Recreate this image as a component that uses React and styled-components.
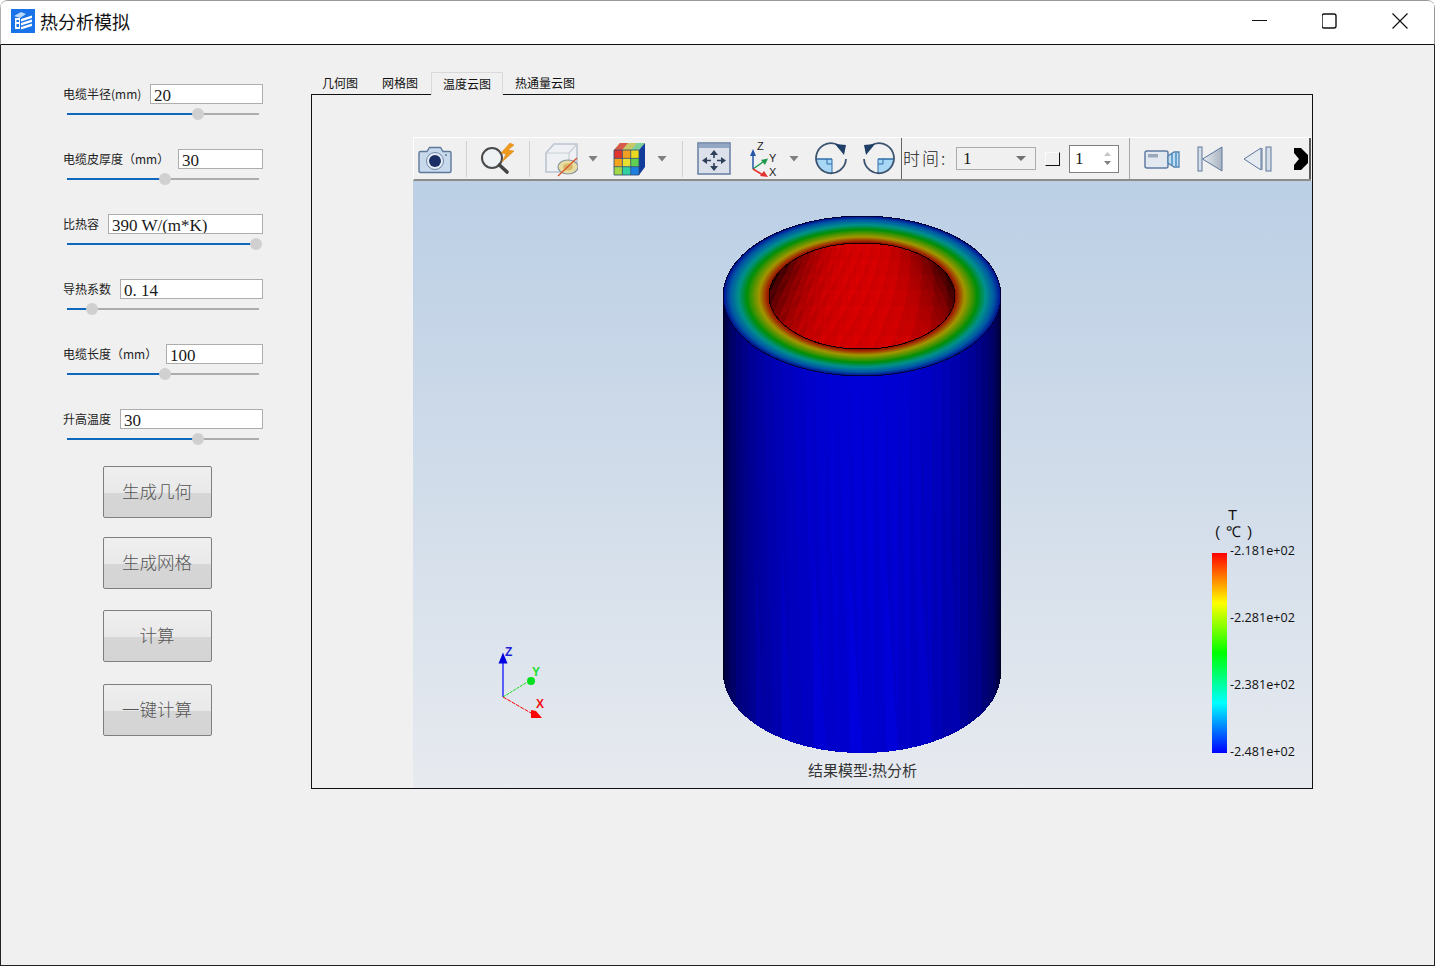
import styled, { createGlobalStyle } from "styled-components";

const GlobalStyle = createGlobalStyle`
  html, body {
    margin: 0;
    padding: 0;
    background: #fff;
  }
  * {
    box-sizing: border-box;
  }
`;

const UI_FONT = `"Noto Sans CJK SC", "Liberation Sans", sans-serif`;
const SERIF_FONT = `"Liberation Serif", "Noto Sans CJK SC", serif`;

const params = [
  { label: "电缆半径(mm)", value: "20", inputWidth: 113, pct: 68 },
  { label: "电缆皮厚度（mm）", value: "30", inputWidth: 85, pct: 51 },
  { label: "比热容", value: "390 W/(m*K)", inputWidth: 155, pct: 98.5 },
  { label: "导热系数", value: "0. 14", inputWidth: 143, pct: 13 },
  { label: "电缆长度（mm）", value: "100", inputWidth: 97, pct: 51 },
  { label: "升高温度", value: "30", inputWidth: 143, pct: 68 },
];

const actions = [
  { text: "生成几何", top: 26 },
  { text: "生成网格", top: 19 },
  { text: "计算", top: 21 },
  { text: "一键计算", top: 22 },
];

const tabs = ["几何图", "网格图", "温度云图", "热通量云图"];
const ticks = ["-2.181e+02", "-2.281e+02", "-2.381e+02", "-2.481e+02"];

// cylinder geometry, in canvas coordinates
const CX = 449;
const TOP_Y = 115;
const BOTTOM_Y = 492;
const RX = 139;
const RY = 80;
const HOLE_RX = 93;
const HOLE_RY = 53;

function sideFacets() {
  const out = [];
  const n = 36;
  const px = (t) => CX + RX * Math.cos(t);
  const py = (t, base) => base + RY * Math.sin(t);
  for (let i = 0; i < n; i++) {
    const a = (Math.PI * i) / n;
    const b = (Math.PI * (i + 1)) / n;
    const c = (Math.PI * Math.min(i + 3, n)) / n;
    const shade = Math.sin((a + b) / 2) ** 0.8;
    const blue = Math.round(18 + 196 * shade);
    const blue2 = Math.round(18 + 188 * shade);
    out.push(
      <polygon
        key={`a${i}`}
        fill={`rgb(0,0,${blue})`}
        points={`${px(a)},${py(a, TOP_Y)} ${px(b)},${py(b, TOP_Y)} ${px(a)},${py(a, BOTTOM_Y)}`}
      />,
      <polygon
        key={`b${i}`}
        fill={`rgb(0,0,${blue2})`}
        points={`${px(b)},${py(b, TOP_Y)} ${px(a)},${py(a, BOTTOM_Y)} ${px(b)},${py(b, BOTTOM_Y)}`}
      />,
    );
    if (i % 3 === 0 && c > b) {
      out.push(
        <polygon
          key={`c${i}`}
          fill={`rgb(0,0,${Math.round(18 + 202 * shade)})`}
          points={`${px(b)},${py(b, TOP_Y + 190)} ${px(c)},${py(c, BOTTOM_Y)} ${px(a)},${py(a, BOTTOM_Y)}`}
        />,
      );
    }
  }
  return out;
}

function holeFacets() {
  const out = [];
  const apex = { x: CX, y: TOP_Y - 180 };
  const n = 30;
  const rows = 9;
  const startT = 0.42;
  const edge = (i) => ({
    x: CX + HOLE_RX * 1.42 * (2 * i / n - 1),
    y: TOP_Y + 55,
  });
  const pt = (i, j) => {
    const e = edge(i);
    const t = startT + ((1 - startT) * j) / rows;
    return { x: apex.x + (e.x - apex.x) * t, y: apex.y + (e.y - apex.y) * t };
  };
  const str = (p) => `${p.x},${p.y}`;
  for (let i = 0; i < n; i++) {
    for (let j = 0; j < rows; j++) {
      const a = pt(i, j);
      const b = pt(i + 1, j);
      const c = pt(i, j + 1);
      const d = pt(i + 1, j + 1);
      const u = Math.abs(i + 0.5 - n / 2) / (n / 2);
      const base = 28 + 182 * (1 - u ** 2.8);
      const odd = (i + j) % 2 === 0 ? 1 : 0;
      out.push(
        <polygon
          key={`h${i}-${j}a`}
          fill={`rgb(${Math.round(base + 8 * odd)},0,0)`}
          points={`${str(a)} ${str(b)} ${str(c)}`}
        />,
        <polygon
          key={`h${i}-${j}b`}
          fill={`rgb(${Math.round(base - 6 + 8 * (1 - odd))},0,0)`}
          points={`${str(b)} ${str(c)} ${str(d)}`}
        />,
      );
    }
  }
  return out;
}

function CableModel() {
  return (
    <ModelSvg width="899" height="607" viewBox="0 0 899 607" shapeRendering="crispEdges">
      <defs>
        <radialGradient id="ring">
          <stop offset="0.665" stopColor="#8c0a00" />
          <stop offset="0.69" stopColor="#a02c00" />
          <stop offset="0.74" stopColor="#a29600" />
          <stop offset="0.78" stopColor="#5c9400" />
          <stop offset="0.83" stopColor="#008e08" />
          <stop offset="0.89" stopColor="#00908c" />
          <stop offset="0.95" stopColor="#0058a4" />
          <stop offset="1" stopColor="#000c90" />
        </radialGradient>
        <clipPath id="hole">
          <ellipse cx={CX} cy={TOP_Y} rx={HOLE_RX} ry={HOLE_RY} />
        </clipPath>
      </defs>
      <path
        d={`M${CX - RX} ${TOP_Y} V${BOTTOM_Y} A${RX} ${RY} 0 0 0 ${CX + RX} ${BOTTOM_Y} V${TOP_Y} Z`}
        fill="#000080"
      />
      {sideFacets()}
      <ellipse cx={CX} cy={TOP_Y} rx={RX} ry={RY} fill="url(#ring)" stroke="#00003a" strokeWidth="1" />
      <g clipPath="url(#hole)">
        <rect x={CX - HOLE_RX} y={TOP_Y - HOLE_RY} width={HOLE_RX * 2} height={HOLE_RY * 2} fill="#c80000" />
        {holeFacets()}
      </g>
      <ellipse cx={CX} cy={TOP_Y} rx={HOLE_RX} ry={HOLE_RY} fill="none" stroke="#120000" strokeWidth="1" />
    </ModelSvg>
  );
}

function AxisTriad() {
  return (
    <TriadSvg width="60" height="80" viewBox="0 0 60 80">
      <line x1="10" y1="57" x2="10" y2="22" stroke="#0000ff" strokeWidth="1.2" />
      <path d="M10 12.5 L14.5 23.5 H5.5 Z" fill="#0000e0" />
      <text x="12" y="16" fontFamily="Liberation Sans" fontWeight="700" fontSize="12" fill="#2020d8">Z</text>
      <line x1="10" y1="57" x2="36" y2="41" stroke="#10e010" strokeWidth="1" strokeDasharray="3 1" />
      <circle cx="38" cy="41" r="4" fill="#00e020" />
      <text x="39" y="36" fontFamily="Liberation Sans" fontWeight="700" fontSize="12" fill="#20e030">Y</text>
      <line x1="10" y1="57" x2="38" y2="73" stroke="#ff0000" strokeWidth="1" strokeDasharray="4 1" />
      <path d="M38 70 L43 71 L49 78 H38 Z" fill="#ff0000" />
      <text x="43" y="68" fontFamily="Liberation Sans" fontWeight="700" fontSize="12" fill="#f01010">X</text>
    </TriadSvg>
  );
}

function AppIcon() {
  return (
    <svg width="24" height="24" viewBox="0 0 24 24">
      <rect width="24" height="24" fill="#1a73e8" />
      <path d="M3 7 L10 3 L15 5 L9 9 Z" fill="#bcd8fa" />
      <path d="M4 9 H9 V20 H4 Z M5.5 11 V13 H8 V11 Z M5.5 15 V18 H8 V15 Z" fill="#fff" fillRule="evenodd" />
      <path d="M10 10 L21 6.5 V9 L10 12.5 Z M10 14 L21 10.5 V13 L10 16.5 Z M10 18 L21 14.5 V17 L10 20.5 Z" fill="#fff" />
    </svg>
  );
}

function App() {
  return (
    <Window>
      <GlobalStyle />
      <TitleBar>
        <AppIcon />
        <TitleText>热分析模拟</TitleText>
        <WindowButtons>
          <WindowButton>
            <svg width="16" height="16" viewBox="0 0 16 16">
              <line x1="0" y1="7.5" x2="15" y2="7.5" stroke="#111" />
            </svg>
          </WindowButton>
          <WindowButton>
            <svg width="16" height="16" viewBox="0 0 16 16">
              <rect x="0" y="1" width="14" height="14" rx="2" fill="none" stroke="#111" strokeWidth="1.4" />
            </svg>
          </WindowButton>
          <WindowButton>
            <svg width="16" height="16" viewBox="0 0 16 16">
              <path d="M0.5 0.5 L15.5 15.5 M15.5 0.5 L0.5 15.5" stroke="#111" strokeWidth="1.2" />
            </svg>
          </WindowButton>
        </WindowButtons>
      </TitleBar>

      <Body>
        <Sidebar>
          <ParamList>
            {params.map((p) => (
              <Param key={p.label}>
                <ParamRow>
                  <ParamLabel>{p.label}</ParamLabel>
                  <ParamInput $w={p.inputWidth} defaultValue={p.value} />
                </ParamRow>
                <Slider>
                  <SliderFill $pct={p.pct} />
                  <SliderThumb $pct={p.pct} />
                </Slider>
              </Param>
            ))}
          </ParamList>
          {actions.map((a) => (
            <ActionButton key={a.text} $top={a.top}>
              {a.text}
            </ActionButton>
          ))}
        </Sidebar>

        <Main>
          <TabStrip>
            {tabs.map((t, i) => (
              <Tab key={t} $active={i === 2}>
                {t}
              </Tab>
            ))}
          </TabStrip>
          <TabPanel>
            <Viewer>
              <Toolbar>
                <Icon $ml={0} width="34" height="30" viewBox="0 0 34 30">
                  <path d="M2.5 7.5 H9 L11.5 3.5 H22.5 L25 7.5 H31.5 Q33 7.5 33 9 V27 Q33 28.5 31.5 28.5 H2.5 Q1 28.5 1 27 V9 Q1 7.5 2.5 7.5 Z" fill="#c9d9ec" stroke="#5d7899" strokeWidth="1.4" />
                  <circle cx="17" cy="17" r="8.5" fill="#e8eef6" stroke="#6c86a8" />
                  <circle cx="17" cy="17" r="6" fill="#1b2f66" />
                  <circle cx="28" cy="11" r="1" fill="#5d7899" />
                </Icon>
                <ToolSep $ml={14} />
                <Icon $ml={13} width="36" height="32" viewBox="0 0 36 32">
                  <circle cx="12" cy="15" r="10" fill="#eef1f4" stroke="#4a4a4a" strokeWidth="2" />
                  <path d="M19.5 22 L27 29" stroke="#444" strokeWidth="3.6" strokeLinecap="round" />
                  <path d="M30 0 L21 10 L26 11 L22 19 L34 8 L28 7 L34 2 Z" fill="#ef9a1a" stroke="#d67d10" strokeWidth="0.5" />
                </Icon>
                <ToolSep $ml={13} />
                <Icon $ml={14} width="34" height="36" viewBox="0 0 34 36">
                  <path d="M2 12 L10 3 H33 V22 L27 31 H2 Z" fill="#eef0f3" stroke="#bcc4cf" strokeWidth="1.6" />
                  <path d="M2 12 H25 V31 M25 12 L33 3" fill="none" stroke="#c8cfd8" strokeWidth="1.2" />
                  <ellipse cx="24" cy="26" rx="10" ry="7" fill="#e8dda0" stroke="#8893a3" strokeWidth="1.2" />
                  <ellipse cx="24" cy="26" rx="5" ry="3.5" fill="#d9b76a" />
                  <line x1="14" y1="35" x2="33" y2="17" stroke="#d9532c" strokeWidth="1.3" />
                </Icon>
                <Caret $ml={10} />
                <Icon $ml={15} width="33" height="34" viewBox="0 0 33 34">
                  <path d="M1 8 L7 1 H32 L26 8 Z" fill="#c8c868" />
                  <path d="M7 1 H15 L9 8 H1 Z" fill="#d85a4a" />
                  <path d="M24 1 H32 L26 8 H18 Z" fill="#7fcf9a" />
                  <path d="M26 8 L32 1 V25 L26 33 Z" fill="#123c9c" />
                  <rect x="1" y="8" width="8.4" height="8.4" fill="#e0342c" />
                  <rect x="9.4" y="8" width="8.3" height="8.4" fill="#f0a020" />
                  <rect x="17.7" y="8" width="8.3" height="8.4" fill="#e8d820" />
                  <rect x="1" y="16.4" width="8.4" height="8.3" fill="#f4a418" />
                  <rect x="9.4" y="16.4" width="8.3" height="8.3" fill="#e8e030" />
                  <rect x="17.7" y="16.4" width="8.3" height="8.3" fill="#60d050" />
                  <rect x="1" y="24.7" width="8.4" height="8.3" fill="#a0d848" />
                  <rect x="9.4" y="24.7" width="8.3" height="8.3" fill="#30d0a0" />
                  <rect x="17.7" y="24.7" width="8.3" height="8.3" fill="#2080e0" />
                  <path d="M1 8 H26 V33 H1 Z M9.4 8 V33 M17.7 8 V33 M1 16.4 H26 M1 24.7 H26" fill="none" stroke="#2c4a6e" strokeWidth="0.8" />
                </Icon>
                <Caret $ml={11} />
                <ToolSep $ml={15} />
                <Icon $ml={14} width="34" height="33" viewBox="0 0 34 33">
                  <rect x="1" y="1" width="32" height="31" fill="#dbe0ea" stroke="#6d84a6" strokeWidth="1.6" />
                  <rect x="2" y="2" width="30" height="4" fill="#93a6c4" />
                  <path d="M17 8 L21 13 H13 Z M17 29 L21 24 H13 Z M5 18.5 L10 15 V22 Z M29 18.5 L24 15 V22 Z" fill="#2d3f59" />
                  <path d="M17 13 V16 M17 21 V24 M10 18.5 H14 M20 18.5 H24" stroke="#2d3f59" strokeWidth="1.6" />
                </Icon>
                <Icon $ml={19} width="30" height="36" viewBox="0 0 30 36">
                  <line x1="3" y1="28" x2="3" y2="13" stroke="#2456a8" strokeWidth="1.5" />
                  <path d="M3 8 L6 15 H0 Z" fill="#2456a8" />
                  <text x="7" y="9" fontFamily="Liberation Sans" fontSize="11" fill="#222">Z</text>
                  <line x1="3" y1="28" x2="13" y2="21" stroke="#1e9a4c" strokeWidth="1.5" />
                  <path d="M18 17.5 L15 24 L11 19 Z" fill="#1e9a4c" />
                  <text x="19" y="21" fontFamily="Liberation Sans" fontSize="11" fill="#222">Y</text>
                  <line x1="3" y1="28" x2="13" y2="34" stroke="#e53030" strokeWidth="1.5" />
                  <path d="M18 36 L10 35 L14 30 Z" fill="#e53030" />
                  <text x="19" y="35" fontFamily="Liberation Sans" fontSize="11" fill="#222">X</text>
                </Icon>
                <Caret $ml={9} />
                <Icon $ml={16} width="32" height="33" viewBox="0 0 32 33">
                  <path d="M1.5 17 H17 V31.5 A15 15 0 0 1 1.5 17 Z" fill="#a8d6f5" />
                  <path d="M12 17 V22 H17" fill="none" stroke="#2f6ea8" />
                  <line x1="1" y1="17" x2="17" y2="17" stroke="#2f6ea8" strokeWidth="1.4" />
                  <path d="M17 17 V31" stroke="#2f6ea8" />
                  <path d="M24 3.5 A15 15 0 1 0 31 17" fill="none" stroke="#3d5470" strokeWidth="1.8" />
                  <path d="M20 2 L31 3 L29 13 Z" fill="#1f3f66" />
                </Icon>
                <Icon $ml={16} width="32" height="33" viewBox="0 0 32 33">
                  <path d="M30.5 17 H15 V31.5 A15 15 0 0 0 30.5 17 Z" fill="#a8d6f5" />
                  <path d="M20 17 V22 H15" fill="none" stroke="#2f6ea8" />
                  <line x1="15" y1="17" x2="31" y2="17" stroke="#2f6ea8" strokeWidth="1.4" />
                  <path d="M15 17 V31" stroke="#2f6ea8" />
                  <path d="M8 3.5 A15 15 0 1 1 1 17" fill="none" stroke="#3d5470" strokeWidth="1.8" />
                  <path d="M12 2 L1 3 L3 13 Z" fill="#1f3f66" />
                </Icon>
                <ToolDivider $ml={6} $dark />
                <TimeLabel>时间:</TimeLabel>
                <Combo>
                  1
                  <ComboCaret />
                </Combo>
                <CornerBox />
                <SpinBox>
                  1
                  <SpinArrows>
                    <SpinArrow />
                    <SpinArrow $down />
                  </SpinArrows>
                </SpinBox>
                <ToolDivider $ml={10} />
                <Icon $ml={14} width="36" height="20" viewBox="0 0 36 20">
                  <rect x="1" y="2" width="23" height="17" rx="2" fill="#e2e8f0" stroke="#5f7ba0" strokeWidth="1.5" />
                  <rect x="4" y="5" width="10" height="3.5" fill="#9aa8ba" />
                  <path d="M24 7 L30 3 H35 V18 H30 L24 14 Z" fill="#c4dcee" stroke="#4f82b0" strokeWidth="1.3" />
                  <path d="M28 5 V16 M32 4 V17" stroke="#2f86c0" strokeWidth="1.3" />
                </Icon>
                <Icon $ml={17} width="26" height="26" viewBox="0 0 26 26">
                  <defs>
                    <linearGradient id="firstFill" x1="0" x2="1">
                      <stop offset="0" stopColor="#e8ecf2" />
                      <stop offset="1" stopColor="#a8b2c0" />
                    </linearGradient>
                  </defs>
                  <rect x="1" y="1" width="4" height="24" fill="#d5dde8" stroke="#5c779c" />
                  <path d="M5.5 13 L25 1 V25 Z" fill="url(#firstFill)" stroke="#5c779c" />
                </Icon>
                <Icon $ml={20} width="30" height="26" viewBox="0 0 30 26">
                  <path d="M1 13 L18 2 V24 Z" fill="#e6ebf2" stroke="#5c779c" />
                  <rect x="23" y="1" width="5" height="24" fill="#d5dde8" stroke="#5c779c" />
                  <line x1="19" y1="2" x2="19" y2="24" stroke="#5c779c" />
                </Icon>
                <Icon $ml={21} width="14" height="22" viewBox="0 0 14 22">
                  <path d="M0 0 H7 L14 7 V15 L7 22 H0 V17 L5 11 L0 5 Z" fill="#000" />
                </Icon>
              </Toolbar>
              <Canvas>
                <CableModel />
                <AxisTriad />
                <Legend>
                  <LegendTitle>T</LegendTitle>
                  <LegendUnit>( ℃ )</LegendUnit>
                  <LegendScale>
                    <ColorBar />
                    <TickList>
                      {ticks.map((t) => (
                        <Tick key={t}>{t}</Tick>
                      ))}
                    </TickList>
                  </LegendScale>
                </Legend>
                <Caption>结果模型:热分析</Caption>
              </Canvas>
            </Viewer>
          </TabPanel>
        </Main>
      </Body>
    </Window>
  );
}

const Window = styled.div`
  width: 1435px;
  height: 966px;
  display: flex;
  flex-direction: column;
  overflow: hidden;
  border-top: 1px solid #989898;
  border-radius: 8px 8px 0 0;
  background: #f0f0f0;
  font-family: ${UI_FONT};
`;

const TitleBar = styled.header`
  flex: none;
  height: 44px;
  display: flex;
  align-items: center;
  padding: 0 0 3px 10px;
  background: #fff;
  border-bottom: 1px solid #111;
  border-left: 1px solid #b0b0b0;
  border-right: 1px solid #989898;
`;

const TitleText = styled.span`
  margin: -1px 0 0 5px;
  font-size: 18px;
  color: #111;
`;

const WindowButtons = styled.div`
  margin-left: auto;
  margin-right: 26px;
  display: flex;
  gap: 54px;
`;

const WindowButton = styled.div`
  width: 16px;
  height: 16px;
  display: flex;
`;

const Body = styled.div`
  flex: 1;
  display: flex;
  border: 1px solid #222;
  border-top: none;
`;

const Sidebar = styled.aside`
  flex: none;
  width: 310px;
  padding: 39px 0 0 62px;
  display: flex;
  flex-direction: column;
`;

const ParamList = styled.div`
  width: 200px;
  display: flex;
  flex-direction: column;
  gap: 34px;
`;

const Param = styled.div`
  display: flex;
  flex-direction: column;
  height: 31px;
`;

const ParamRow = styled.div`
  height: 20px;
  display: flex;
  align-items: center;
  justify-content: space-between;
`;

const ParamLabel = styled.label`
  margin-top: -2px;
  font-size: 12px;
  color: #222;
  white-space: nowrap;
`;

const ParamInput = styled.input`
  flex: none;
  width: ${(p) => p.$w}px;
  height: 20px;
  padding: 3px 3px 0 3px;
  border: 1px solid #adadad;
  border-radius: 0;
  outline: none;
  background: #fff;
  font-family: ${SERIF_FONT};
  font-size: 17px;
  color: #1a1a1a;
`;

const Slider = styled.div`
  position: relative;
  margin: 9px 4px 0;
  height: 2px;
  background: #acacac;
`;

const SliderFill = styled.div`
  height: 2px;
  width: ${(p) => p.$pct}%;
  background: #1068bd;
`;

const SliderThumb = styled.div`
  position: absolute;
  top: -5px;
  left: ${(p) => p.$pct}%;
  width: 12px;
  height: 12px;
  margin-left: -6px;
  border-radius: 50%;
  background: #d0d0d0;
`;

const ActionButton = styled.button`
  flex: none;
  width: 109px;
  height: 52px;
  margin: ${(p) => p.$top}px 0 0 40px;
  padding: 0 1px 4px 0;
  border: 1px solid #7f7f7f;
  border-radius: 2px;
  background: linear-gradient(#efefef 0, #e9e9e9 51%, #d6d6d6 53%, #d4d4d4 100%);
  font-family: ${UI_FONT};
  font-size: 17.5px;
  font-weight: 300;
  color: #555;
`;

const Main = styled.main`
  flex: none;
  padding-top: 27px;
  display: flex;
  flex-direction: column;
`;

const TabStrip = styled.div`
  height: 23px;
  margin-left: -1px;
  display: flex;
  align-items: flex-start;
  position: relative;
  z-index: 1;
`;

const Tab = styled.div`
  height: ${(p) => (p.$active ? 23 : 22)}px;
  margin-left: ${(p) => (p.$active ? 1 : 0)}px;
  padding: ${(p) => (p.$active ? "0 11px 2px" : "0 12px 2px")};
  display: flex;
  align-items: center;
  font-size: 12px;
  color: #111;
  background: #f0f0f0;
  border: ${(p) => (p.$active ? "1px solid #d9d9d9" : "none")};
  border-bottom: none;
`;

const TabPanel = styled.section`
  width: 1002px;
  height: 695px;
  margin-top: -1px;
  padding: 42px 0 0 101px;
  border: 1px solid #111;
`;

const Viewer = styled.div`
  width: 899px;
  height: 651px;
  display: flex;
  flex-direction: column;
`;

const Toolbar = styled.div`
  flex: none;
  width: 898px;
  height: 44px;
  padding-left: 4px;
  display: flex;
  align-items: center;
  overflow: hidden;
  background: #f0f0f0;
  border-top: 1px solid #fff;
  border-left: 1px solid #fff;
  border-bottom: 2px solid #8c8c8c;
  box-shadow: inset -2px 0 0 #5a5a5a;
`;

const Icon = styled.svg`
  flex: none;
  margin-left: ${(p) => p.$ml}px;
`;

const ToolSep = styled.div`
  flex: none;
  width: 1px;
  height: 36px;
  margin-left: ${(p) => p.$ml}px;
  background: #d2d2d2;
`;

const ToolDivider = styled.div`
  flex: none;
  width: 1px;
  align-self: stretch;
  margin-left: ${(p) => p.$ml}px;
  background: ${(p) => (p.$dark ? "#666" : "#a8a8a8")};
`;

const Caret = styled.div`
  flex: none;
  width: 10px;
  height: 6px;
  margin-left: ${(p) => p.$ml}px;
  background: #808080;
  clip-path: polygon(0 0, 100% 0, 50% 100%);
`;

const TimeLabel = styled.span`
  flex: none;
  width: 42px;
  margin: -2px 0 0 1px;
  font-size: 17px;
  letter-spacing: 2px;
  white-space: nowrap;
  color: #222;
  font-weight: 300;
`;

const Combo = styled.div`
  flex: none;
  width: 80px;
  height: 23px;
  margin-left: 11px;
  padding-left: 6px;
  display: flex;
  align-items: center;
  justify-content: space-between;
  border: 1px solid #adadad;
  font-family: ${SERIF_FONT};
  font-size: 17px;
  color: #1a1a1a;
`;

const ComboCaret = styled.div`
  width: 10px;
  height: 5px;
  margin-right: 9px;
  background: #707070;
  clip-path: polygon(0 0, 100% 0, 50% 100%);
`;

const CornerBox = styled.div`
  flex: none;
  width: 15px;
  height: 14px;
  margin-left: 9px;
  border-right: 1px solid #111;
  border-bottom: 1px solid #111;
  border-top: 1px solid #fafafa;
  border-left: 1px solid #fafafa;
`;

const SpinBox = styled.div`
  flex: none;
  width: 50px;
  height: 28px;
  margin-left: 9px;
  padding: 0 7px 0 5px;
  display: flex;
  align-items: center;
  justify-content: space-between;
  background: #fff;
  border: 1px solid #808080;
  font-family: ${SERIF_FONT};
  font-size: 17px;
  color: #1a1a1a;
`;

const SpinArrows = styled.div`
  display: flex;
  flex-direction: column;
  gap: 5px;
`;

const SpinArrow = styled.div`
  width: 7px;
  height: 4px;
  background: ${(p) => (p.$down ? "#808080" : "#c4c4c4")};
  clip-path: ${(p) =>
    p.$down ? "polygon(0 0, 100% 0, 50% 100%)" : "polygon(50% 0, 100% 100%, 0 100%)"};
`;

const Canvas = styled.div`
  position: relative;
  flex: 1;
  overflow: hidden;
  background: linear-gradient(#bbcfe5, #e7eaef);
`;

const ModelSvg = styled.svg`
  display: block;
`;

const TriadSvg = styled.svg`
  position: absolute;
  left: 80px;
  top: 459px;
`;

const Legend = styled.div`
  position: absolute;
  left: 799px;
  top: 325px;
  display: flex;
  flex-direction: column;
  font-family: "Liberation Sans", sans-serif;
  color: #111;
`;

const LegendTitle = styled.div`
  margin-left: 16px;
  font-size: 15px;
  line-height: 17px;
`;

const LegendUnit = styled.div`
  margin-left: 3px;
  font-size: 15px;
  line-height: 17px;
  letter-spacing: 1px;
  white-space: nowrap;
`;

const LegendScale = styled.div`
  display: flex;
  margin-top: 13px;
`;

const ColorBar = styled.div`
  width: 15px;
  height: 200px;
  background: linear-gradient(#f00, #ff0 25%, #0f0 50%, #0ff 75%, #00f);
`;

const TickList = styled.div`
  height: 217px;
  margin: -10px 0 0 3px;
  display: flex;
  flex-direction: column;
  justify-content: space-between;
`;

const Tick = styled.div`
  font-family: "Open Sans", "Liberation Sans", sans-serif;
  font-size: 12.6px;
  line-height: 16px;
  white-space: nowrap;
`;

const Caption = styled.div`
  position: absolute;
  left: 0;
  right: 0;
  bottom: 9px;
  text-align: center;
  font-size: 15px;
  line-height: 18px;
  color: #333;
`;

export default App;
